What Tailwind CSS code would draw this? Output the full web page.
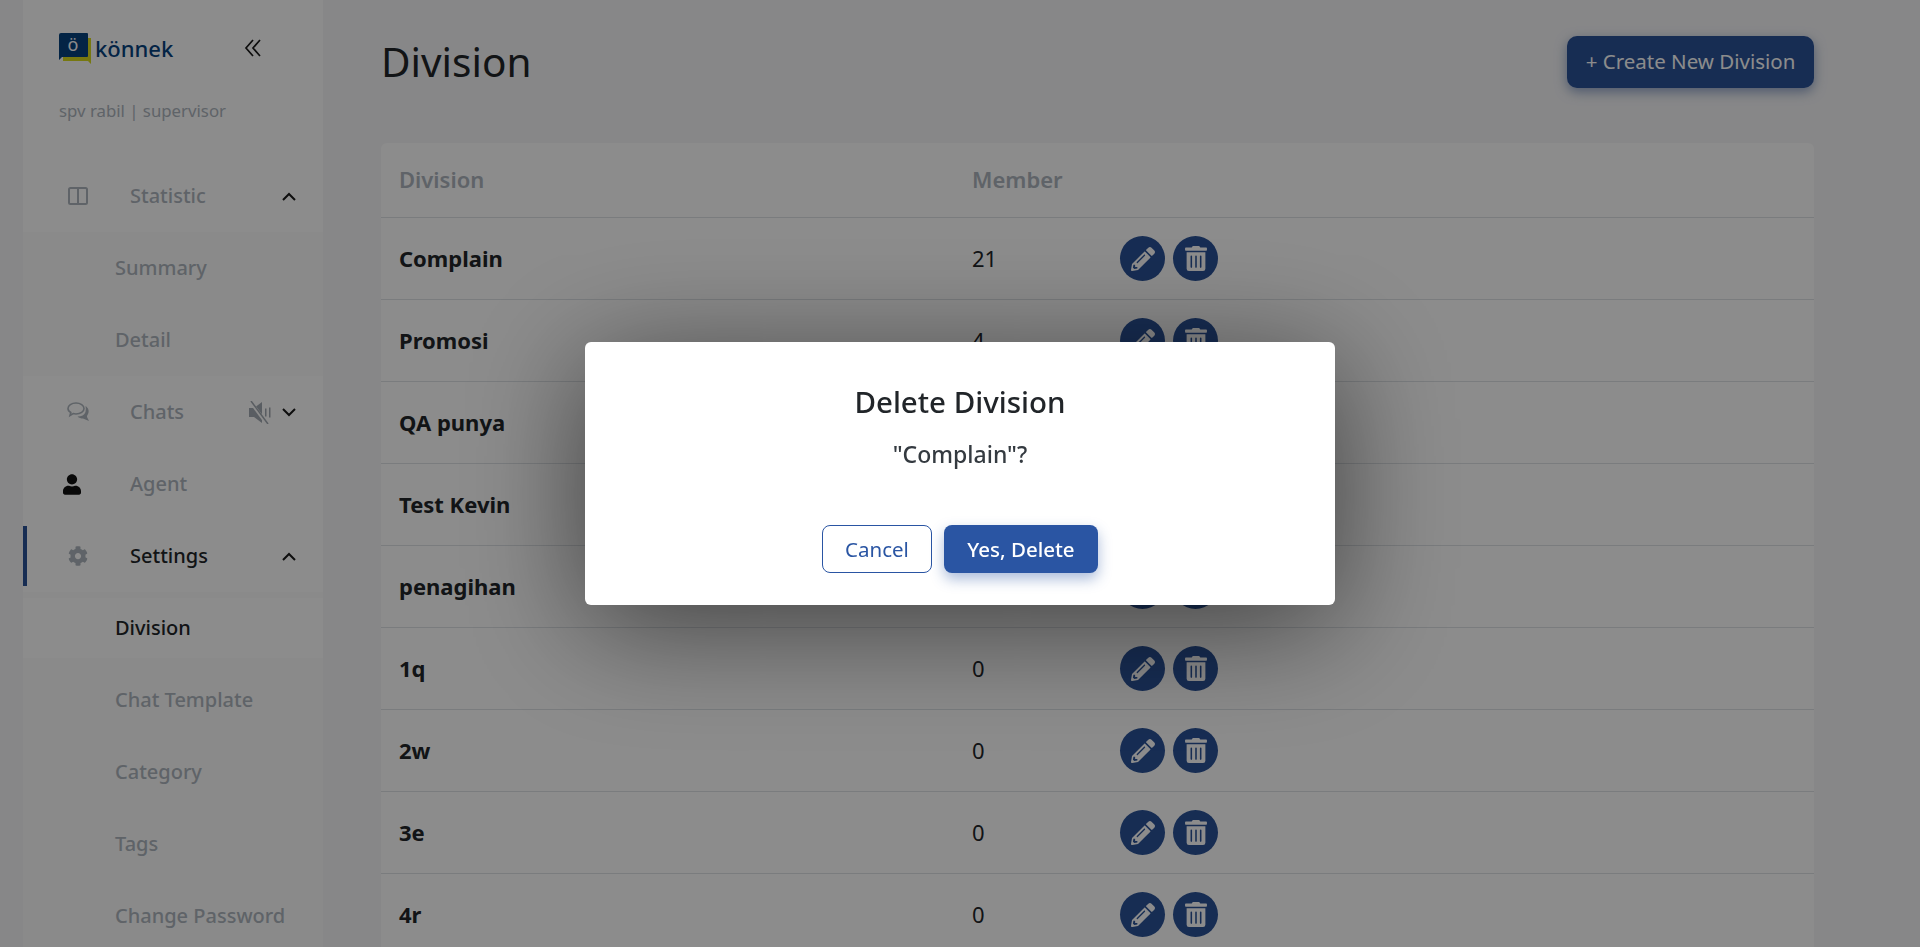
<!DOCTYPE html>
<html lang="en">
    <head>
        <meta charset="UTF-8" />
        <meta name="viewport" content="width=device-width, initial-scale=1.0" />
        <title>Division</title>
        <script src="https://cdn.jsdelivr.net/npm/@tailwindcss/browser@4"></script>
    </head>
    <body class="font-['Noto_Sans',sans-serif] bg-[#f6f6f8] text-[#212529]">
        <div class="h-[947px] overflow-hidden flex">
            <!-- sidebar -->
            <aside class="ml-[23px] w-[300px] h-full shrink-0 bg-white flex flex-col">
                <div class="h-[160px] shrink-0 pl-[36px] pt-[32px]">
                    <div class="flex items-center h-[32px]">
                        <svg class="w-[32px] h-[31px]" viewBox="0 0 32 31">
                            <path d="M4 5h28v26l-3-3H4z" fill="#d9db1e" />
                            <path d="M2 0h26a1 1 0 0 1 1 1v22a1 1 0 0 1-1 1H3l-3 3V2a2 2 0 0 1 2-2z" fill="#06427f" />
                            <text x="14" y="18" font-size="18" font-family="Noto Sans" fill="#ffffff" text-anchor="middle">ö</text>
                        </svg>
                        <span class="ml-[4px] text-[22px] leading-[32px] font-medium text-[#06427f]">könnek</span>
                        <svg class="ml-[71px] w-[17px] h-[18px]" viewBox="0 0 17 18" fill="none" stroke="#1a1a1a" stroke-width="1.7"><path d="M9 1 2 9l7 8M16 1 9 9l7 8" /></svg>
                    </div>
                    <p class="mt-[36px] text-[16.800px] leading-[22px] text-[#adb5bd]">spv rabil | supervisor</p>
                </div>

                <div class="my-1.5 h-[60px] shrink-0 flex items-center pl-[45px] pr-[27px]">
                    <svg class="w-[20px] h-[18px]" viewBox="0 0 20 18" fill="none" stroke="#adb5bd" stroke-width="2"><rect x="1" y="1" width="18" height="16" rx="1.5" /><path d="M10 1v16" /></svg>
                    <span class="ml-[42px] text-[20px] font-medium text-[#adb5bd]">Statistic</span>
                    <svg class="ml-auto w-[14px] h-[9px]" viewBox="0 0 14 9" fill="none" stroke="#1a1a1a" stroke-width="2"><path d="m1 8 6-6 6 6" /></svg>
                </div>
                <div class="bg-[#fbfbfb] shrink-0">
                    <div class="h-[72px] flex items-center pl-[92px] text-[20px] font-medium text-[#adb5bd]">Summary</div>
                    <div class="h-[72px] flex items-center pl-[92px] text-[20px] font-medium text-[#adb5bd]">Detail</div>
                </div>
                <div class="my-1.5 h-[60px] shrink-0 flex items-center pl-[44px] pr-[27px]">
                    <svg class="w-[23px] h-[20px]" viewBox="0 0 23 20" fill="none" stroke="#adb5bd" stroke-width="1.6"><path d="M9 1c4.500 0 8 2.500 8 5.500S13.500 12 9 12c-1 0-2-.1-2.800-.4L3 13.500l.8-3C2 9.500 1 8 1 6.500 1 3.500 4.500 1 9 1z" /><path d="M18.500 4c3 2 4 5 2.500 8-.5 1-1 1.500-1 3l2 4-6-2.500c-2 0-4-.5-5.500-2 4 0 7-1.500 8-4.500.5-2 .5-4 0-6z" fill="#adb5bd" stroke="none" /></svg>
                    <span class="ml-[40px] text-[20px] font-medium text-[#adb5bd]">Chats</span>
                    <svg class="ml-auto w-[23px] h-[23px]" viewBox="0 0 23 23" fill="#a3aab2"><path d="M0 7h5l8-6v21l-8-6H0z" /><path d="M16 7.500h1.500v8H16zM20 6.500h1.500v10H20z" /><path d="m1 0 17 23" stroke="#ffffff" stroke-width="3.500" /><path d="m2 0 17 23" stroke="#a3aab2" stroke-width="1.500" /></svg>
                    <svg class="ml-[10px] w-[14px] h-[9px]" viewBox="0 0 14 9" fill="none" stroke="#1a1a1a" stroke-width="2"><path d="m1 1 6 6 6-6" /></svg>
                </div>
                <div class="my-1.5 h-[60px] shrink-0 flex items-center pl-[40px] pr-[27px]">
                    <svg class="w-[18px] h-[21px]" viewBox="0 0 448 512" fill="#111111"><path d="M224 256c70.700 0 128-57.300 128-128S294.700 0 224 0 96 57.300 96 128s57.300 128 128 128zm89.600 32h-16.700c-22.200 10.200-46.900 16-72.900 16s-50.600-5.800-72.900-16h-16.700C60.200 288 0 348.200 0 422.400V464c0 26.500 21.500 48 48 48h352c26.500 0 48-21.500 48-48v-41.600c0-74.200-60.200-134.400-134.400-134.400z" /></svg>
                    <span class="ml-[49px] text-[20px] font-medium text-[#adb5bd]">Agent</span>
                </div>
                <div class="my-1.5 h-[60px] shrink-0 flex items-center border-l-4 border-[#2a5298] pl-[41px] pr-[27px]">
                    <svg class="w-[20px] h-[20px]" viewBox="0 0 512 512" fill="#adb5bd"><path d="M487.400 315.700l-42.600-24.600c4.300-23.200 4.300-47 0-70.200l42.600-24.600c4.900-2.800 7.100-8.600 5.500-14-11.100-35.600-30-67.800-54.700-94.600-3.800-4.100-10-5.100-14.800-2.300L380.800 110c-17.900-15.400-38.500-27.300-60.800-35.100V25.800c0-5.600-3.900-10.500-9.400-11.700-36.700-8.200-74.300-7.800-109.200 0-5.500 1.200-9.400 6.100-9.400 11.700V75c-22.200 7.900-42.800 19.800-60.800 35.100L88.700 85.500c-4.900-2.800-11-1.900-14.800 2.300-24.700 26.700-43.600 58.900-54.700 94.600-1.700 5.400.6 11.200 5.500 14L67.300 221c-4.300 23.200-4.300 47 0 70.200l-42.600 24.600c-4.900 2.800-7.100 8.600-5.500 14 11.100 35.600 30 67.800 54.700 94.600 3.800 4.100 10 5.100 14.800 2.300l42.600-24.600c17.900 15.400 38.500 27.300 60.800 35.100v49.200c0 5.600 3.900 10.500 9.400 11.700 36.700 8.200 74.300 7.800 109.200 0 5.500-1.200 9.400-6.100 9.400-11.700v-49.200c22.200-7.900 42.800-19.800 60.800-35.100l42.600 24.600c4.900 2.800 11 1.900 14.800-2.300 24.700-26.700 43.600-58.900 54.700-94.600 1.500-5.500-.7-11.300-5.600-14.100zM256 336c-44.100 0-80-35.900-80-80s35.900-80 80-80 80 35.900 80 80-35.900 80-80 80z" /></svg>
                    <span class="ml-[42px] text-[20px] font-medium">Settings</span>
                    <svg class="ml-auto w-[14px] h-[9px]" viewBox="0 0 14 9" fill="none" stroke="#1a1a1a" stroke-width="2"><path d="m1 8 6-6 6 6" /></svg>
                </div>
                <div class="bg-[#fbfbfb] shrink-0">
                    <div class="my-1.5 h-[60px] flex items-center pl-[92px] text-[20px] font-medium bg-white">Division</div>
                    <div class="h-[72px] flex items-center pl-[92px] text-[20px] font-medium text-[#adb5bd]">Chat Template</div>
                    <div class="h-[72px] flex items-center pl-[92px] text-[20px] font-medium text-[#adb5bd]">Category</div>
                    <div class="h-[72px] flex items-center pl-[92px] text-[20px] font-medium text-[#adb5bd]">Tags</div>
                    <div class="h-[72px] flex items-center pl-[92px] text-[20px] font-medium text-[#adb5bd]">Change Password</div>
                </div>
            </aside>

            <!-- main -->
            <main class="ml-[58px] w-[1433px] shrink-0">
                <div class="h-[143px] pt-[36px] flex items-start justify-between">
                    <h1 class="text-[40.500px] leading-[52px]">Division</h1>
                    <button class="h-[52px] w-[247px] pb-[2px] rounded-[10px] bg-[#2a5298] text-white text-[20.500px] shadow-[0_4px_12px_rgba(42,82,152,0.5)]">+ Create New Division</button>
                </div>
                <div class="bg-white rounded-[6px]">
                    <div class="h-[75px] pb-[2px] flex items-center pl-[18px] text-[22px] font-semibold text-[#adb5bd] border-b border-[#dee2e6]">
                        <span class="w-[573px]">Division</span><span>Member</span>
                    </div>
                    <div class="h-[82px] flex items-center pl-[18px] text-[22px] text-[#212529] border-b border-[#dee2e6]">
                        <span class="w-[573px] font-bold">Complain</span><span class="w-[148px]">21</span>
                        <div class="flex gap-2">
                            <button class="w-[45px] h-[45px] rounded-full bg-[#2a5298] flex items-center justify-center"><svg class="w-[24px] h-[24px]" viewBox="0 0 512 512" fill="#ffffff"><path d="M497.900 142.100l-46.100 46.100c-4.700 4.700-12.300 4.700-17 0l-111-111c-4.700-4.700-4.700-12.300 0-17l46.100-46.100c18.700-18.700 49.100-18.700 67.900 0l60.100 60.100c18.800 18.700 18.800 49.100 0 67.900zM284.200 99.800L21.600 362.400.4 483.900c-2.900 16.400 11.400 30.600 27.800 27.800l121.500-21.300 262.600-262.600c4.700-4.700 4.700-12.300 0-17l-111-111c-4.800-4.700-12.400-4.700-17.100 0zM124.100 339.900c-5.500-5.500-5.500-14.300 0-19.800l154-154c5.500-5.500 14.300-5.500 19.800 0s5.500 14.300 0 19.800l-154 154c-5.500 5.500-14.300 5.500-19.800 0zM88 424h48v36.300l-64.500 11.300-31.100-31.100L51.700 376H88v48z" /></svg></button>
                            <button class="w-[45px] h-[45px] rounded-full bg-[#2a5298] flex items-center justify-center"><svg class="w-[22px] h-[25px]" viewBox="0 0 448 512" fill="#ffffff"><path d="M32 464a48 48 0 0 0 48 48h288a48 48 0 0 0 48-48V128H32zm272-256a16 16 0 0 1 32 0v224a16 16 0 0 1-32 0zm-96 0a16 16 0 0 1 32 0v224a16 16 0 0 1-32 0zm-96 0a16 16 0 0 1 32 0v224a16 16 0 0 1-32 0zM432 32H312l-9.400-18.700A24 24 0 0 0 281.100 0H166.800a23.720 23.720 0 0 0-21.400 13.300L136 32H16A16 16 0 0 0 0 48v32a16 16 0 0 0 16 16h416a16 16 0 0 0 16-16V48a16 16 0 0 0-16-16z" /></svg></button>
                        </div>
                    </div>
                    <div id="rows"></div>
                </div>
            </main>
        </div>

        <!-- overlay + modal -->
        <div class="fixed inset-0 bg-black/45 z-10">
            <div class="absolute left-[585px] top-[342px] w-[750px] h-[263px] bg-white rounded-[6px] shadow-[0_20px_120px_rgba(0,0,0,0.55)] flex flex-col items-center">
                <h2 class="mt-[40px] text-[29.500px] leading-[40px] font-medium">Delete Division</h2>
                <p class="mt-[17px] text-[23px] leading-[30px] font-medium text-[#343a40]">"Complain"?</p>
                <div class="mt-[56px] flex gap-3">
                    <button class="w-[110px] h-[48px] rounded-[8px] border border-[#2a55a3] bg-white text-[#2a55a3] text-[20.500px]">Cancel</button>
                    <button class="w-[154px] h-[48px] rounded-[8px] bg-[#2a55a3] text-white text-[20.500px] font-medium shadow-[0_6px_14px_rgba(42,85,163,0.4)]">Yes, Delete</button>
                </div>
            </div>
        </div>

        <script>
            const rows = [
                ["Promosi", "4"],
                ["QA punya", "0"],
                ["Test Kevin", "0"],
                ["penagihan", "0"],
                ["1q", "0"],
                ["2w", "0"],
                ["3e", "0"],
                ["4r", "0"],
            ];
            const first = document.querySelector("main .bg-white > div:nth-child(2)");
            const holder = document.getElementById("rows");
            rows.forEach(function (row) {
                const el = first.cloneNode(true);
                el.children[0].textContent = row[0];
                el.children[1].textContent = row[1];
                holder.appendChild(el);
            });
        </script>
    </body>
</html>
